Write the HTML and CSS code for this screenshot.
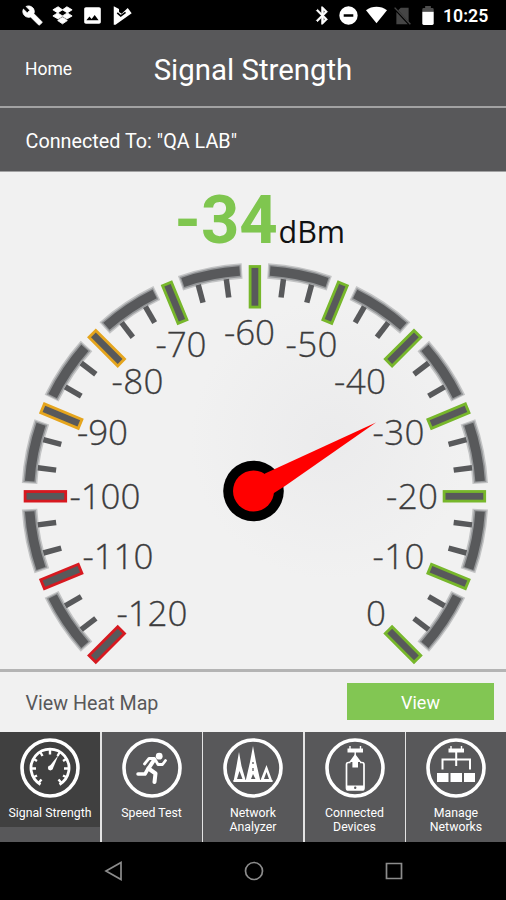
FILE: index.html
```html
<!DOCTYPE html>
<html lang="en">
<head>
<meta charset="utf-8">
<title>Signal Strength</title>
<link rel="stylesheet" href="styles.css">
</head>
<body>
<div class="screen">
  <div class="status">
    <div class="status-left">
      <svg viewBox="0 0 24 24"><path class="thick" d="M22.700 19l-9.100-9.100c.9-2.300.4-5-1.500-6.900-2-2-5-2.400-7.400-1.300L9 6 6 9 1.600 4.700C.4 7.100.9 10.100 2.900 12.100c1.900 1.900 4.600 2.400 6.900 1.500l9.100 9.100c.4.4 1 .4 1.400 0l2.300-2.300c.5-.4.5-1.100.1-1.400z"/></svg>
      <svg viewBox="0 0 24 24"><path class="thick" d="M7 2L12 5.500 6.500 9 1 5.500zM17 2L23 5.500 17.500 9 12 5.500zM6.500 9L12 12.500 7 16 1 12.500zM17.500 9L23 12.500 17 16 12 12.500zM12 14l5.500 3.800L12 21.500l-5.500-3.700z"/></svg>
      <svg viewBox="0 0 24 24"><path d="M21.500 19.500v-15c0-1.100-.9-2-2-2h-15c-1.100 0-2 .9-2 2v15c0 1.100.9 2 2 2h15c1.100 0 2-.9 2-2zM8.500 13l2.500 3 3.500-4.500 4.500 6H5z" fill-rule="evenodd"/></svg>
      <svg viewBox="0 0 24 24"><path d="M2 1.500L8 4.500V8l3 2 7-6.500 1.500 2L22.500 9.500 4 22.500H2z"/><path d="M6 9l4 3.500 5.500-4" class="cut"/></svg>
    </div>
    <div class="status-right">
      <svg viewBox="0 0 24 24"><path d="M17.710 7.710L12 2h-1v7.590L6.410 5 5 6.410 10.590 12 5 17.590 6.410 19 11 14.410V22h1l5.710-5.710-4.300-4.290 4.300-4.290zM13 5.830l1.880 1.880L13 9.590V5.830zm1.880 10.460L13 18.170v-3.760l1.880 1.880z" class="bold"/></svg>
      <svg class="dnd" viewBox="0 0 24 24"><path d="M12 1.500A10.500 10.500 0 1 0 12 22.500 10.500 10.500 0 1 0 12 1.500zM6.500 10.500h11v3h-11z" fill-rule="evenodd"/></svg>
      <svg class="wifi" viewBox="0 0 24 20"><path d="M0 4.500C7-.8 17-.8 24 4.500L12 19.500z"/></svg>
      <svg class="sim" viewBox="0 0 24 24"><path d="M10 3h9v16L7 6zM5 8l13 14H5z"/><path d="M3 3l18 19" class="slash"/></svg>
      <svg class="battery" viewBox="0 0 12 20"><path d="M0 6V3.500Q0 2 1.500 2H3V0h6v2h1.500Q12 2 12 3.500V6z" fill="#4d4d4d"/><path d="M0 6h12v12.500Q12 20 10.500 20h-9Q0 20 0 18.500z"/></svg>
      <span class="time">10:25</span>
    </div>
  </div>

  <header class="header">
    <span class="home">Home</span>
    <h1>Signal Strength</h1>
  </header>
  <div class="connected">Connected To: "QA LAB"</div>

  <main class="gauge">
    <div class="reading"><span class="value">-34</span><span class="unit">dBm</span></div>
    <svg class="dial" viewBox="0 258 506 411">
      <defs>
        <radialGradient id="glow" cx="330" cy="440" r="140" gradientUnits="userSpaceOnUse">
          <stop offset="0" stop-color="#ebebec"/><stop offset="1" stop-color="#f1f1f1"/>
        </radialGradient>
        <g id="seg">
          <path d="M-31.400 -223.500A225.700 225.700 0 0 1 31.400 -223.500" stroke="#c3c4c5" stroke-width="15.500"/>
          <path d="M-30.200 -223.700A225.700 225.700 0 0 1 30.200 -223.700" stroke="#949698" stroke-width="12.500"/>
          <path d="M-29 -223.850A225.700 225.700 0 0 1 29 -223.850" stroke="#58595b" stroke-width="9.500"/>
          <path d="M0 -219V-200.500" transform="rotate(-3.750)" stroke="#58595b" stroke-width="5.500"/>
          <path d="M0 -219V-200.500" transform="rotate(3.750)" stroke="#58595b" stroke-width="5.500"/>
        </g>
        <rect id="tick" x="-4.800" y="-229.800" width="9.600" height="40.600" stroke-width="2.800" fill="#58595b"/>
      </defs>
      <circle cx="330" cy="440" r="140" fill="url(#glow)"/>
      <g transform="translate(254.900 496.300)">
        <g fill="none">
          <use href="#seg" transform="rotate(-123.750)"/><use href="#seg" transform="rotate(-101.250)"/>
          <use href="#seg" transform="rotate(-78.750)"/><use href="#seg" transform="rotate(-56.250)"/>
          <use href="#seg" transform="rotate(-33.750)"/><use href="#seg" transform="rotate(-11.250)"/>
          <use href="#seg" transform="rotate(11.250)"/><use href="#seg" transform="rotate(33.750)"/>
          <use href="#seg" transform="rotate(56.250)"/><use href="#seg" transform="rotate(78.750)"/>
          <use href="#seg" transform="rotate(101.250)"/><use href="#seg" transform="rotate(123.750)"/>
        </g>
        <g stroke="#d71920">
          <use href="#tick" transform="rotate(-135)"/><use href="#tick" transform="rotate(-112.500)"/><use href="#tick" transform="rotate(-90)"/>
        </g>
        <g stroke="#e5a51d">
          <use href="#tick" transform="rotate(-67.500)"/><use href="#tick" transform="rotate(-45)"/>
        </g>
        <g stroke="#77b72b">
          <use href="#tick" transform="rotate(-22.500)"/><use href="#tick"/><use href="#tick" transform="rotate(22.500)"/>
          <use href="#tick" transform="rotate(45)"/><use href="#tick" transform="rotate(67.500)"/><use href="#tick" transform="rotate(90)"/>
          <use href="#tick" transform="rotate(112.500)"/><use href="#tick" transform="rotate(135)"/>
        </g>
      </g>
      <g class="labels">
        <text x="116.500" y="625.500" textLength="71">-120</text>
        <text x="82.500" y="568.500" textLength="71">-110</text>
        <text x="69.500" y="508.500" textLength="71">-100</text>
        <text x="77" y="444.500" textLength="51">-90</text>
        <text x="111.500" y="393.500" textLength="52">-80</text>
        <text x="155.500" y="356.500" textLength="51">-70</text>
        <text x="224" y="344.500" textLength="51">-60</text>
        <text x="285.500" y="356.500" textLength="52">-50</text>
        <text x="334" y="393.500" textLength="52">-40</text>
        <text x="372.500" y="444.500" textLength="52">-30</text>
        <text x="386" y="508.500" textLength="52">-20</text>
        <text x="372.500" y="568.500" textLength="52">-10</text>
        <text x="366" y="625.500">0</text>
      </g>
      <circle cx="253.500" cy="491" r="30.300"/>
      <circle cx="253.500" cy="491" r="20.500" fill="#f00"/>
      <path d="M376 422.500L265 473.500 263 500 285 486z" fill="#f00"/>
    </svg>
  </main>

  <section class="heat">
    <span>View Heat Map</span>
    <button>View</button>
  </section>

  <nav class="tabs">
    <div class="tab active">
      <svg viewBox="0 0 60 60"><circle cx="30" cy="30" r="28" class="ring"/>
        <path d="M20.500 46A19 19 0 1 1 39.500 46" class="line" stroke-width="2.800" transform="translate(0 .5)"/>
        <path d="M30 12v4.500M20.500 14.500l2 3.500M39.500 14.500l-2 3.500M13 20.500l4 2.500M47 20.500l-4 2.500M11 30.500h5M49 30.500h-5M13 39.500l4-2M47 39.500l-4-2M18 45.500l3.500-4M42 45.500l-3.500-4" class="line" stroke-width="2.400"/>
        <path d="M38.500 17L32.500 31.500 28.500 29.500z"/><circle cx="30.300" cy="30" r="2.400"/></svg>
      <span>Signal Strength</span>
    </div>
    <div class="tab">
      <svg viewBox="0 0 60 60"><circle cx="30" cy="30" r="28" class="ring"/>
        <circle cx="37.200" cy="18.200" r="3.400"/>
        <path d="M22.500 26L27 20.500 32.500 20.500 36 26.500 40.500 26.500 43.500 22.500" class="line join" stroke-width="2.800"/>
        <path d="M32 22L26.500 30.500 33.500 35.500 32.500 44" class="line join" stroke-width="4"/>
        <path d="M26.500 30L23 36H16" class="line join" stroke-width="3.500"/></svg>
      <span>Speed Test</span>
    </div>
    <div class="tab">
      <svg viewBox="0 0 60 60"><circle cx="30" cy="30" r="28" class="ring"/>
        <path d="M16 14L18.500 28 23 43.500H10.500L13.500 28zM16.500 33L14 41H19.500z" fill-rule="evenodd"/>
        <path d="M30 8L33 24 37.500 43.500H22.500L27 24zM30 36L28 41H32.500z" fill-rule="evenodd"/>
        <path d="M43.500 27L49.500 43.500H37zM43.500 34L41 41H46z" fill-rule="evenodd"/>
        <path d="M10.500 43h39" class="line" stroke-width="1.800"/><path d="M30 24v2M30 30v3" stroke="#58585a" stroke-width="1.300"/></svg>
      <span>Network<br>Analyzer</span>
    </div>
    <div class="tab">
      <svg viewBox="0 0 60 60"><circle cx="30" cy="30" r="28" class="ring"/>
        <path d="M22.500 10.500h15.500v4H22.500z"/><path d="M25 8v3M35.500 8v3M30.200 14v4" class="line" stroke-width="1.400"/>
        <path d="M30.200 16l6 8h-3.200v5.500h-5.600V24h-3.200z"/>
        <path d="M25.500 24.500H23.500Q21.500 24.500 21.500 26.500V50Q21.500 52 23.500 52H37Q39 52 39 50V26.500Q39 24.500 37 24.500H35" class="line" stroke-width="1.700"/>
        <path d="M21.500 47.500H39V51q0 1-1.500 1h-14.500q-1.500 0-1.500-1z"/><circle cx="30.200" cy="49.700" r="1.200" fill="#58585a"/></svg>
      <span>Connected<br>Devices</span>
    </div>
    <div class="tab">
      <svg viewBox="0 0 60 60"><circle cx="30" cy="30" r="28" class="ring"/>
        <path d="M22.500 10.500h15.500v4H22.500z"/><path d="M25 8v3M35.500 8v3" class="line" stroke-width="1.400"/>
        <path d="M30.200 14v14M16.500 31.500V21.500H44v10" class="line" stroke-width="2"/>
        <path d="M11 35h11.500v9H11zM24.500 35H36v9H24.500zM38 35h11v9H38z"/></svg>
      <span>Manage<br>Networks</span>
    </div>
  </nav>

  <footer class="android">
    <svg viewBox="0 0 20 20"><path d="M17 1.500v17L2 10z"/></svg>
    <svg viewBox="0 0 20 20"><circle cx="10" cy="10" r="8.500"/></svg>
    <svg viewBox="0 0 20 20"><path d="M2.500 2.500h15v15h-15z"/></svg>
  </footer>
</div>
</body>
</html>
```
FILE: styles.css
```css
* { box-sizing: border-box; }
body { margin: 0; background: #000; font-family: Roboto, sans-serif; }
.screen { width: 506px; height: 900px; display: flex; flex-direction: column; overflow: hidden; }

.status { height: 30px; flex: none; display: flex; justify-content: space-between; align-items: center; padding: 0 18px 0 22px; color: #fff; }
.status svg { width: 21px; height: 21px; fill: #fff; display: block; }
.status-left { display: flex; gap: 9px; }
.status-right { display: flex; align-items: center; }
.status-right .dnd { margin-left: 5px; }
.status-right .wifi { width: 21px; height: 18px; margin-left: 7px; }
.status-right .sim { fill: #454545; margin-left: 5px; }
.status-right .battery { width: 12px; height: 19px; margin-left: 9px; }
.status .cut { fill: none; stroke: #000; stroke-width: 1.800; }
.status .bold { stroke: #fff; stroke-width: .8; }
.status .thick { stroke: #fff; stroke-width: 1; }
.status .slash { stroke: #454545; stroke-width: 1.600; }
.time { font-size: 17.700px; font-weight: 600; line-height: 30px; margin: 2px 0 0 9px; width: 45px; white-space: nowrap; }

.header { height: 78px; flex: none; display: grid; grid-template-columns: 153px 200px 1fr; align-items: center; background: #58585a; border-bottom: 2px solid #a2a2a3; color: #fff; padding-top: 3px; }
.home { padding: 0 0 2px 25px; font-size: 17.500px; }
.header h1 { margin: 0; font-size: 29.400px; font-weight: 400; white-space: nowrap; text-align: center; }
.connected { height: 64px; flex: none; background: #58585a; border-bottom: 1px solid #a2a2a3; color: #fff; font-size: 19.800px; line-height: 67px; padding-left: 25.500px; }

.gauge { height: 497px; flex: none; background: #f1f1f1; display: flex; flex-direction: column; }
.reading { height: 86px; display: flex; align-items: baseline; padding-left: 174.500px; line-height: 97px; white-space: nowrap; }
.value { color: #7fc64f; font-size: 67px; font-weight: 700; width: 104px; }
.unit { color: #111; font-family: "Open Sans", sans-serif; font-size: 30.500px; }
.dial { display: block; width: 506px; height: 411px; }
.labels { font-family: "Open Sans", sans-serif; font-weight: 300; font-size: 35px; fill: #3c3c3d; stroke: #3c3c3d; stroke-width: .3; }

.heat { height: 63px; flex: none; background: #f1f1f1; border-top: 3px solid #b4b4b4; display: flex; align-items: center; justify-content: space-between; padding: 0 12px 1px 25.500px; font-size: 19.700px; color: #58585a; }
.heat span { padding-top: 3px; }
.heat button { width: 147px; height: 37px; border: 0; padding: 1px 0 0; background: #82c653; color: #fff; font: 18px Roboto, sans-serif; }

.tabs { height: 110px; flex: none; display: grid; grid-template-columns: 100px 100px 100px 100px 100px; column-gap: 1.500px; background: #e4e4e4; }
.tab { background: #58585a; color: #fff; display: flex; flex-direction: column; align-items: center; padding-top: 6px; font-size: 12.300px; line-height: 14px; text-align: center; white-space: nowrap; }
.tab.active { background: linear-gradient(#404040 95px, #58585a 95px); }
.tab svg { width: 60px; height: 60px; fill: #fff; }
.tab span { margin-top: 8px; }
.tab .ring { fill: none; stroke: #fff; stroke-width: 3.600; }
.tab .line { fill: none; stroke: #fff; }
.tab .join { stroke-linejoin: round; stroke-linecap: round; }

.android { height: 58px; display: flex; align-items: center; justify-content: center; gap: 120px; padding-left: 2px; background: #000; }
.android svg { width: 20px; height: 20px; fill: none; stroke: #8c8c8c; stroke-width: 1.700; }
```
